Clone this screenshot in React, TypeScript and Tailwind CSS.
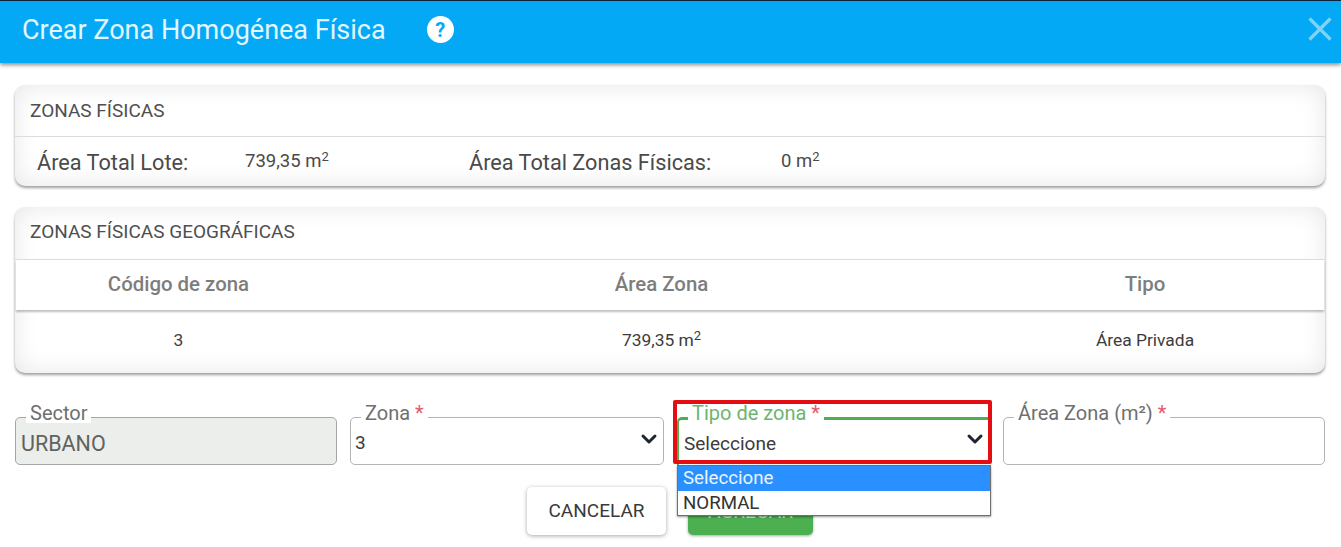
import { ChevronDown } from "lucide-react";

function Card({ title, tall, children }: { title: string; tall?: boolean; children: React.ReactNode }) {
    return (
        <section className="rounded-[10px] bg-white shadow-[inset_0_0_24px_rgba(0,0,0,0.1),0_2px_3px_rgba(0,0,0,0.38)]">
            <h2 className={`${tall ? "h-[53px] pt-[14px]" : "h-[52px] pt-[15px]"} pl-[15px] text-[19px] leading-[22px] font-normal text-[#4f4f4f] border-b border-[#dcdcdc]`}>
                {title}
            </h2>
            {children}
        </section>
    );
}

function Area({ value }: { value: string }) {
    return (
        <span>
            {value} m<sup className="text-[13px] leading-none">2</sup>
        </span>
    );
}

function Field({ label, required, value, select, disabled, focused }: {
    label: string;
    required?: boolean;
    value?: string;
    select?: boolean;
    disabled?: boolean;
    focused?: boolean;
}) {
    const box = focused
        ? "bg-white border-[#4caf50] border-t-[3px] border-l-[2px] border-r-0 border-b-0 rounded-tl-[5px] pl-[5px]"
        : disabled
            ? "bg-[#eceeec] border border-[#a4a8a4] rounded-[5px] pl-[4px]"
            : "bg-white border border-[#b4b4b4] rounded-[5px] pl-[4px]";
    return (
        <div className="relative h-[48px]">
            <div className={`h-full flex items-center ${box}`}>
                <span className={disabled ? "text-[21.5px] text-[#5f6360] pl-[1px] pt-[7px]" : "text-[19px] text-[#3c3c3c] pt-[4px]"}>{value}</span>
                {select && <ChevronDown size={24} strokeWidth={3} className="absolute right-[3px] top-[10px] text-[#1f2530]" />}
            </div>
            <label className={`absolute -top-[14px] left-[11px] bg-white px-[4px] h-[20px] text-[20px] leading-[20px] ${focused ? "text-[#6cb56f]" : "text-[#6f6f6f]"}`}>
                {label}
                {required && <span className="text-[#e5596b]"> *</span>}
            </label>
        </div>
    );
}

export default function App() {
    return (
        <div className="h-[547px] w-[1341px] overflow-hidden bg-white font-['Roboto',sans-serif]">
            <header className="h-[63px] border-t border-[#0d2236] bg-[#03a9f4] flex items-center pl-[22px] pr-[9px] shadow-[0_2px_4px_rgba(0,0,0,0.45)]">
                <h1 className="text-[27px] font-normal text-[#e2f6ff] mb-[3px]">Crear Zona Homogénea Física</h1>
                <span className="ml-[41px] mb-[5px] flex h-[27px] w-[27px] items-center justify-center rounded-full bg-white text-[20px] font-bold text-[#03a9f4]">?</span>
                <svg viewBox="0 0 24 24" className="ml-auto mb-[6px] h-[24px] w-[24px] text-[#7fd3f9]" fill="none" stroke="currentColor" strokeWidth="3.2">
                    <path d="M1.5 1.5 L22.5 22.5 M22.5 1.5 L1.5 22.5" />
                </svg>
            </header>

            <main className="pl-[15px] pr-[16px] pt-[22px]">
                <Card title="ZONAS FÍSICAS">
                    <div className="h-[49px] flex items-center text-[#4a4a4a]">
                        <span className="ml-[22px] w-[208px] text-[21.7px] pt-[3px]">Área Total Lote:</span>
                        <span className="w-[224px] text-[18.5px] pt-[1px]"><Area value="739,35" /></span>
                        <span className="w-[312px] text-[21.7px] pt-[3px]">Área Total Zonas Físicas:</span>
                        <span className="text-[18.5px] pt-[1px]"><Area value="0" /></span>
                    </div>
                </Card>

                <div className="mt-[21px]">
                    <Card title="ZONAS FÍSICAS GEOGRÁFICAS" tall>
                        <div className="mx-[1px] h-[50px] pb-[2px] grid grid-cols-[325px_641px_326px] items-center bg-white text-center text-[20.4px] font-medium text-[#7d7d7d] shadow-[0_2px_2px_rgba(0,0,0,0.25)]">
                            <span>Código de zona</span>
                            <span>Área Zona</span>
                            <span>Tipo</span>
                        </div>
                        <div className="mx-[1px] h-[63px] pb-[2px] grid grid-cols-[325px_641px_326px] items-center text-center text-[17.4px] text-[#3c3c3c]">
                            <span>3</span>
                            <span><Area value="739,35" /></span>
                            <span>Área Privada</span>
                        </div>
                    </Card>
                </div>

                <div className="mt-[44px] grid grid-cols-[322px_314px_313px_322px] gap-x-[13px]">
                    <Field label="Sector" value="URBANO" disabled />
                    <Field label="Zona" required value="3" select />
                    <div className="relative">
                        <Field label="Tipo de zona" required value="Seleccione" select focused />
                        <div className="absolute -left-[4px] -right-[2px] -top-[17px] h-[64px] border-[4px] border-[#e30d12] rounded-[2px] pointer-events-none" />
                        <ul className="absolute z-10 left-0 -right-[1px] top-[48px] bg-white border border-[#6f6f6f] text-[18.7px] text-[#333] shadow-[0_1px_2px_rgba(0,0,0,0.4)]">
                            <li className="bg-[#2a90ff] text-[#e8f4ff] px-[5px] leading-[25px]">Seleccione</li>
                            <li className="px-[5px] leading-[24px]">NORMAL</li>
                        </ul>
                    </div>
                    <Field label="Área Zona (m²)" required />
                </div>

                <div className="mt-[22px] ml-[512px] flex items-end gap-[22px]">
                    <button className="h-[48px] w-[139px] rounded-[5px] bg-white text-[19px] text-[#3a3a3a] shadow-[0_1px_4px_rgba(0,0,0,0.35)]">CANCELAR</button>
                    <button className="h-[48px] w-[125px] pt-[3px] rounded-[5px] bg-[#4caf50] text-[19px] text-[#cfe8d0] shadow-[0_1px_3px_rgba(0,0,0,0.35)]">AGREGAR</button>
                </div>
            </main>
        </div>
    );
}
